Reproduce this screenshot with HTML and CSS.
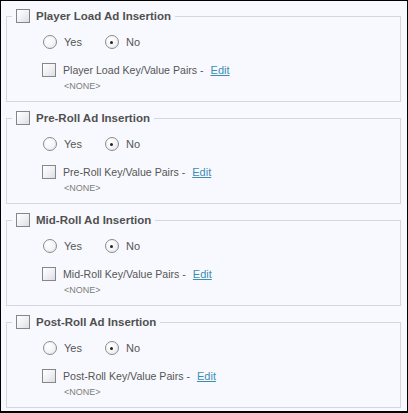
FILE: index.html
```html
<!DOCTYPE html>
<html lang="en">
<head>
    <meta charset="UTF-8">
    <meta name="viewport" content="width=device-width, initial-scale=1.0">
    <title>Ad Insertion</title>
    <link rel="stylesheet" href="styles.css">
</head>
<body>
    <div class="panel">
        <fieldset class="group">
            <legend class="group-title">
                <input type="checkbox" class="box">
                <span>Player Load Ad Insertion</span>
            </legend>
            <div class="choice-row">
                <label class="choice"><input type="radio" class="dot" name="playerLoad">Yes</label>
                <label class="choice"><input type="radio" class="dot" name="playerLoad" checked>No</label>
            </div>
            <div class="pairs-row">
                <input type="checkbox" class="box">
                <span>Player Load Key/Value Pairs -</span>
                <a href="#" class="edit">Edit</a>
            </div>
            <div class="pairs-value">&lt;NONE&gt;</div>
        </fieldset>

        <fieldset class="group">
            <legend class="group-title">
                <input type="checkbox" class="box">
                <span>Pre-Roll Ad Insertion</span>
            </legend>
            <div class="choice-row">
                <label class="choice"><input type="radio" class="dot" name="preRoll">Yes</label>
                <label class="choice"><input type="radio" class="dot" name="preRoll" checked>No</label>
            </div>
            <div class="pairs-row">
                <input type="checkbox" class="box">
                <span>Pre-Roll Key/Value Pairs -</span>
                <a href="#" class="edit">Edit</a>
            </div>
            <div class="pairs-value">&lt;NONE&gt;</div>
        </fieldset>

        <fieldset class="group">
            <legend class="group-title">
                <input type="checkbox" class="box">
                <span>Mid-Roll Ad Insertion</span>
            </legend>
            <div class="choice-row">
                <label class="choice"><input type="radio" class="dot" name="midRoll">Yes</label>
                <label class="choice"><input type="radio" class="dot" name="midRoll" checked>No</label>
            </div>
            <div class="pairs-row">
                <input type="checkbox" class="box">
                <span>Mid-Roll Key/Value Pairs -</span>
                <a href="#" class="edit">Edit</a>
            </div>
            <div class="pairs-value">&lt;NONE&gt;</div>
        </fieldset>

        <fieldset class="group">
            <legend class="group-title">
                <input type="checkbox" class="box">
                <span>Post-Roll Ad Insertion</span>
            </legend>
            <div class="choice-row">
                <label class="choice"><input type="radio" class="dot" name="postRoll">Yes</label>
                <label class="choice"><input type="radio" class="dot" name="postRoll" checked>No</label>
            </div>
            <div class="pairs-row">
                <input type="checkbox" class="box">
                <span>Post-Roll Key/Value Pairs -</span>
                <a href="#" class="edit">Edit</a>
            </div>
            <div class="pairs-value">&lt;NONE&gt;</div>
        </fieldset>
    </div>
</body>
</html>
```

FILE: styles.css
```css
body {
    margin: 0;
    padding: 0;
    font-family: "Liberation Sans", Arial, sans-serif;
    color: #555555;
    overflow: hidden;
}
.panel {
    box-sizing: border-box;
    width: 408px;
    height: 413px;
    padding-top: 7px;
    background: #f8f9fe;
    border: 1px solid #000000;
    border-bottom-width: 2px;
}
.group {
    margin: 0 6px 8px 5px;
    padding: 0 0 9px 0;
    border: 1px solid #d6d7dc;
    min-width: 0;
}
.group-title {
    display: flex;
    align-items: center;
    gap: 6px;
    height: 16px;
    margin-left: 5px;
    padding: 0 4px;
    font-size: 11.5px;
    font-weight: bold;
    color: #505050;
}
.box {
    appearance: none;
    -webkit-appearance: none;
    box-sizing: border-box;
    width: 14px;
    height: 14px;
    margin: 0;
    border: 1px solid #85858c;
    background: linear-gradient(135deg, #ffffff 0%, #f1f1f5 50%, #dcdce2 100%);
    flex-shrink: 0;
}
.choice-row {
    display: flex;
    align-items: center;
    gap: 23px;
    height: 16px;
    margin-top: 10px;
    padding-left: 36px;
    font-size: 11px;
}
.choice {
    display: flex;
    align-items: center;
    gap: 7px;
}
.dot {
    appearance: none;
    -webkit-appearance: none;
    box-sizing: border-box;
    width: 14px;
    height: 14px;
    margin: 0;
    border: 1px solid #8a8a90;
    border-radius: 50%;
    background: radial-gradient(circle at 35% 35%, #ffffff 0%, #f4f4f7 55%, #dedee4 100%);
    display: flex;
    align-items: center;
    justify-content: center;
}
.dot:checked::after {
    content: "";
    width: 3px;
    height: 3px;
    border-radius: 50%;
    background: #222222;
}
.pairs-row {
    display: flex;
    align-items: center;
    gap: 7px;
    height: 16px;
    margin-top: 12px;
    padding-left: 35px;
    font-size: 10.6px;
}
.edit {
    font-size: 11px;
    color: #3b8db4;
    text-decoration: underline;
}
.pairs-value {
    margin-top: 2px;
    padding-left: 57px;
    font-size: 9px;
    line-height: 12px;
    color: #7c7c7c;
}
```
